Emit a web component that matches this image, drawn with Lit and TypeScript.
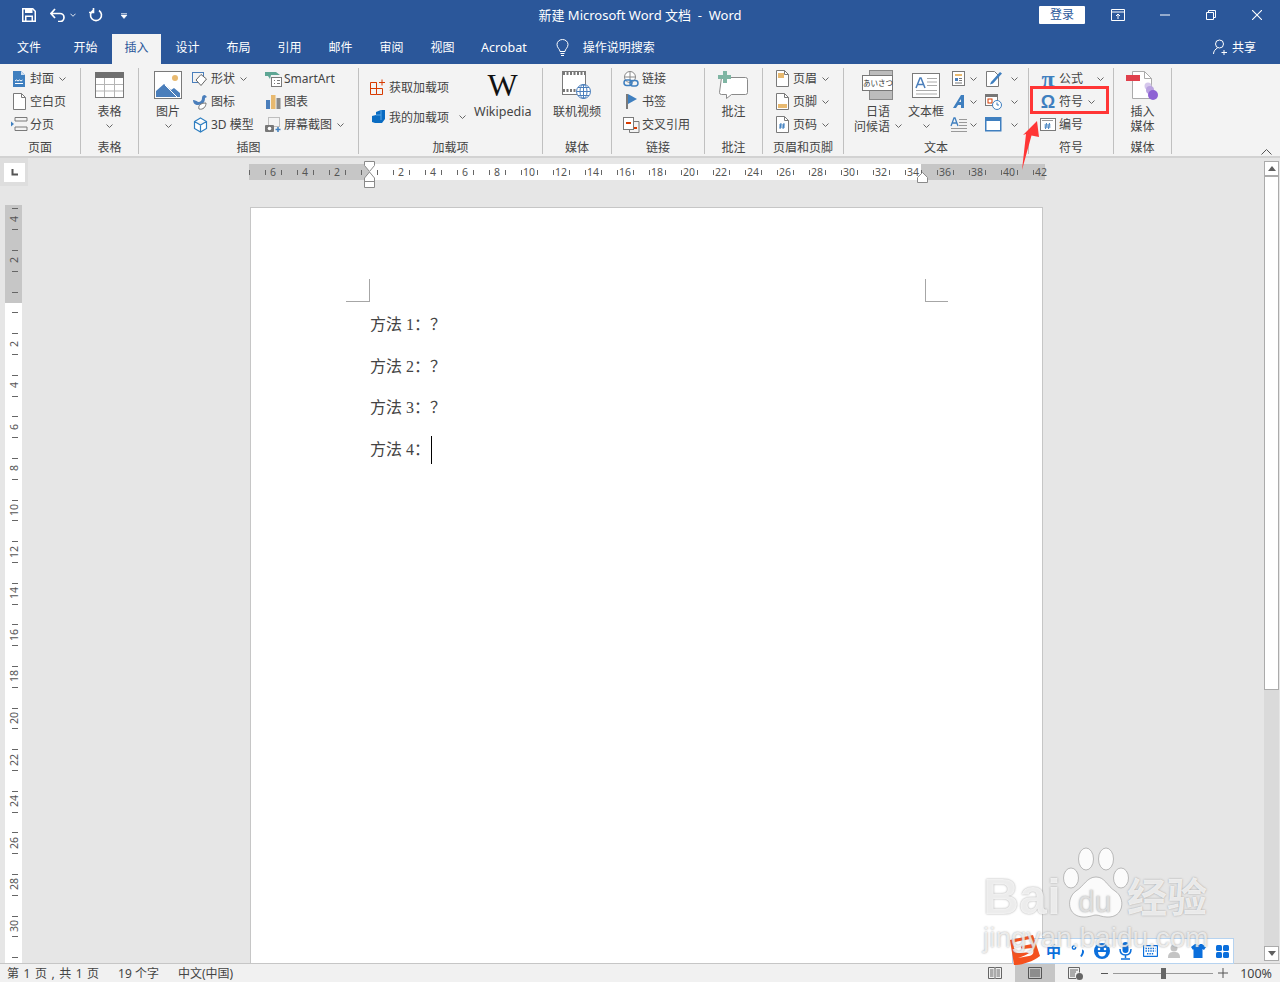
import { LitElement, html, svg, css } from "lit";
import { customElement } from "lit/decorators.js";

const B = "#4a7ebb", G = "#7a7a7a", O = "#e8b96f", R = "#d83b01";
const chev = html`<svg class="chev" width="7" height="4" viewBox="0 0 7 4"><path d="M.5.5l3 3 3-3" fill="none" stroke="#666"/></svg>`;
const page = () => svg`<path d="M1.500.5h8l4 4v12h-12z" fill="#fff" stroke="${G}"/><path d="M9.500.5v4h4" fill="none" stroke="${G}"/>`;

const I: Record<string, any> = {
  cover: html`<svg width="14" height="18" viewBox="0 0 14 18"><path d="M1 1h8l4 4v12H1z" fill="#3f7fbf"/><path d="M9 1v4h4z" fill="#cfe0f2"/><path d="M3 11l1.500-1 1.500 1 1.500-1 1.500 1 1.500-1M3 13.500h8" stroke="#fff" fill="none"/></svg>`,
  blank: html`<svg width="15" height="18" viewBox="0 0 15 18">${page()}</svg>`,
  brk: html`<svg width="17" height="17" viewBox="0 0 17 17"><path d="M4 1.500h12M4 14.500h12M4 1.500V5h12V1.500M4 14.500V11h12v3.500" fill="none" stroke="${G}"/><path d="M0 5.500l3 2.500-3 2.500z" fill="#3f7fbf"/></svg>`,
  table: html`<svg width="29" height="26" viewBox="0 0 29 26"><rect x=".5" y=".5" width="28" height="25" fill="#fff" stroke="${G}"/><rect width="29" height="6" fill="#6f6f6f"/><path d="M1 12.500h27M1 19h27M9.500 6v19M19.500 6v19" stroke="#b5b5b5"/></svg>`,
  pic: html`<svg width="28" height="28" viewBox="0 0 28 28"><rect x=".5" y=".5" width="27" height="27" fill="#fff" stroke="${G}"/><circle cx="21" cy="7" r="3" fill="${O}"/><path d="M2 26v-6l8-7 7 6 3-2 6 5v4z" fill="${B}"/><path d="M11 14l12 12" stroke="#fff"/></svg>`,
  shape: html`<svg width="16" height="16" viewBox="0 0 16 16"><rect x=".5" y="1.500" width="11" height="10" fill="none" stroke="${B}"/><path d="M9 3.500l5.500 4.500L9 14.500 4 9z" fill="#fff" stroke="#666"/></svg>`,
  ico: html`<svg width="16" height="16" viewBox="0 0 16 16"><path d="M1 6c2 0 4 1 5 2 3 0 4-2 4-4 0-2 1-3 3-3l2 2-2 1c0 4-2 7-7 7-3 0-5-2-5-5z" fill="${B}"/><path d="M7 15c-1-3 1-6 7-6 0 4-3 7-7 6z" fill="#fff" stroke="#777"/></svg>`,
  cube: html`<svg width="15" height="16" viewBox="0 0 15 16"><path d="M7.500 1l6 3.500v7l-6 3.500-6-3.500v-7zM1.500 4.500l6 3.500 6-3.500M7.500 8v7" fill="#fff" stroke="#2f7fc1" stroke-width="1.200"/></svg>`,
  smart: html`<svg width="17" height="16" viewBox="0 0 17 16"><path d="M0 1h11l4 3h-9l-1 4-2-3H0z" fill="#5ea694"/><rect x="6.500" y="6.500" width="10" height="9" fill="#fff" stroke="${G}"/><path d="M9 9.500h1M12 9.500h3M9 12.500h1M12 12.500h3" stroke="${G}"/></svg>`,
  chart: html`<svg width="15" height="15" viewBox="0 0 15 15"><rect y="6" width="4" height="9" fill="${B}"/><rect x="5" y="1" width="4.500" height="14" fill="${O}"/><rect x="10.500" y="4" width="4" height="11" fill="#8a8a8a"/></svg>`,
  shot: html`<svg width="17" height="15" viewBox="0 0 17 15"><rect x="3.500" y=".5" width="11" height="9" fill="none" stroke="#888" stroke-dasharray="1 1"/><rect y="8" width="9" height="7" rx="1" fill="#777"/><circle cx="4.500" cy="11.500" r="1.800" fill="#fff"/><path d="M13 10v5M10.500 12.500h5" stroke="#3f7fbf" stroke-width="1.500"/></svg>`,
  getadd: html`<svg width="16" height="16" viewBox="0 0 16 16"><path d="M.5 3.500h6v12h-6zM.5 9.500h12v6h-6M6.500 9.500V3.500" fill="none" stroke="${R}"/><path d="M12 .5v6M9 3.500h6" stroke="${R}"/></svg>`,
  myadd: html`<svg width="15" height="14" viewBox="0 0 15 14"><path d="M5 2l5-2h4v9l-3 4H4L1 12V6l4-1z" fill="#0a6cc2"/><path d="M5 5h5V0M10 5v5" stroke="#5aa7e6" fill="none"/></svg>`,
  video: html`<svg width="29" height="28" viewBox="0 0 29 28"><rect x=".5" y=".5" width="23" height="23" fill="#fff" stroke="${G}"/><path d="M1 2.500h22M1 19.500h22" stroke="#777" stroke-width="3" stroke-dasharray="2 1.500"/><circle cx="21.500" cy="20.500" r="7" fill="#fff" stroke="${B}"/><path d="M14.500 20.500h14M21.500 13.500v14M16 16.500h11M16 24.500h11" stroke="${B}"/><ellipse cx="21.500" cy="20.500" rx="3.500" ry="7" fill="none" stroke="${B}"/></svg>`,
  link: html`<svg width="16" height="16" viewBox="0 0 16 16"><circle cx="7" cy="6" r="5.500" fill="#fff" stroke="#888"/><path d="M1.500 6h11M7 .5v11" stroke="#888"/><rect x="1" y="9" width="8" height="5.500" rx="2.700" fill="none" stroke="#3f7fbf" stroke-width="1.500"/><rect x="7" y="9.500" width="8" height="5.500" rx="2.700" fill="none" stroke="#3f7fbf" stroke-width="1.500"/></svg>`,
  mark: html`<svg width="13" height="15" viewBox="0 0 13 15"><rect x="1" width="2" height="15" fill="${G}"/><path d="M3 0l9 5-9 5z" fill="#3f7fbf"/></svg>`,
  cross: html`<svg width="17" height="16" viewBox="0 0 17 16"><rect x=".5" y=".5" width="10" height="12" fill="#fff" stroke="${G}"/><path d="M3 6h5" stroke="${R}" stroke-width="2"/><path d="M10.500 4.500h5.500v11H6.500v-3" fill="none" stroke="${G}"/><path d="M11 11h3" stroke="${R}" stroke-width="2"/></svg>`,
  note: html`<svg width="31" height="29" viewBox="0 0 31 29"><path d="M3.500 6.500h24a2 2 0 0 1 2 2v13a2 2 0 0 1-2 2h-14l-5 4v-4h-5a2 2 0 0 1-2-2z" fill="#fff" stroke="#8a8a8a"/><path d="M5 0h4v4h4v4H9v4H5V8H0V4h5z" fill="#7fb5a3"/></svg>`,
  head: html`<svg width="15" height="18" viewBox="0 0 15 18">${page()}<rect x="3" y="3" width="6" height="5" fill="${O}"/></svg>`,
  foot: html`<svg width="15" height="18" viewBox="0 0 15 18">${page()}<rect x="3" y="11" width="9" height="4" fill="${O}"/></svg>`,
  pnum: html`<svg width="15" height="18" viewBox="0 0 15 18">${page()}<path d="M6 7l-1 6M9 7l-1 6M4 9h6M4 11h6" stroke="#3f7fbf"/></svg>`,
  qp: html`<svg width="14" height="15" viewBox="0 0 14 15"><rect x=".5" y=".5" width="12" height="14" fill="#fff" stroke="${G}"/><rect x="3" y="3" width="7" height="2" fill="${O}"/><rect x="3" y="7" width="3" height="3" fill="${B}"/><path d="M7 7.500h3M7 9.500h3M3 12h7" stroke="#777"/></svg>`,
  wa: html`<svg width="14" height="15" viewBox="0 0 14 15"><path d="M1 14L9 1h3v13H9v-3H6l-2 3zM7 8h2V5z" fill="#3f7fbf"/></svg>`,
  drop: html`<svg width="17" height="16" viewBox="0 0 17 16"><path d="M1 9l3-8h1l3 8M2.500 6h4" fill="none" stroke="#3f7fbf" stroke-width="1.300"/><path d="M9 2.500h8M9 5.500h8M9 8.500h8M1 11.500h16M1 14.500h16" stroke="#999"/></svg>`,
  sig: html`<svg width="17" height="17" viewBox="0 0 17 17"><path d="M1.500 1.500h8l4 4v11h-12z" fill="#fff" stroke="${G}"/><path d="M6 12L15 2l2 1.500-9 10-3 1z" fill="#3f7fbf"/></svg>`,
  date: html`<svg width="17" height="16" viewBox="0 0 17 16"><rect x=".5" y=".5" width="12" height="11" fill="#fff" stroke="${G}"/><rect width="13" height="3" fill="#777"/><rect x="3" y="5" width="4" height="4" fill="none" stroke="${R}"/><circle cx="12" cy="11" r="4.500" fill="#fff" stroke="#3f7fbf"/><path d="M12 8.500V11h2" fill="none" stroke="#3f7fbf"/></svg>`,
  obj: html`<svg width="17" height="15" viewBox="0 0 17 15"><rect x=".75" y=".75" width="15" height="13" fill="#fff" stroke="#3f7fbf" stroke-width="1.500"/><rect width="16" height="4" fill="#3f7fbf"/></svg>`,
  num: html`<svg width="16" height="13" viewBox="0 0 16 13"><rect x=".5" y=".5" width="15" height="12" fill="#fff" stroke="${G}"/><path d="M2 2.500h11" stroke="#999"/><path d="M6.500 5l-1 6M9.500 5l-1 6M4.500 7h6M4.500 9h6" stroke="#3f7fbf"/></svg>`,
  tbox: html`<svg width="28" height="25" viewBox="0 0 28 25"><rect x=".5" y=".5" width="27" height="24" fill="#fff" stroke="${G}"/><path d="M4 15l4-10h1l4 10M5.500 11.500h6" fill="none" stroke="${B}" stroke-width="1.500"/><path d="M15 5.500h10M15 9h10M15 12.500h10M4 17.500h21M4 21h21" stroke="#aaa"/></svg>`,
  media: html`<svg width="33" height="29" viewBox="0 0 33 29"><path d="M6.500.5h12l7 7v20h-19z" fill="#fff" stroke="#aaa"/><path d="M18.500.5v7h7" fill="none" stroke="#aaa"/><rect y="4" width="14" height="6" fill="#e0404c"/><circle cx="22" cy="15" r="3.500" fill="#d6c8ec"/><circle cx="24" cy="19" r="4" fill="#b9a2e0"/><circle cx="27" cy="24" r="5" fill="#8e62d4"/></svg>`,
};

const row = (icon: any, label: string, car = false, cls = "") =>
  html`<div class="row ${cls}"><span class="ic">${icon}</span><span>${label}</span>${car ? chev : ""}</div>`;
const big = (icon: any, l1: string, l2: any = "", cls = "") =>
  html`<div class="big ${cls}"><div class="bigic">${icon}</div><div class="ln">${l1}</div><div class="ln">${l2}</div></div>`;
const smallCaret = (icon: any) => html`<div class="row sc"><span class="ic2">${icon}</span>${chev}</div>`;
const group = (cls: string, body: any, label: string) =>
  html`<section class="grp ${cls}"><div class="body">${body}</div><div class="glabel">${label}</div></section><div class="sep"></div>`;

const hLabels = [-6, -4, -2, 2, 4, 6, 8, 10, 12, 14, 16, 18, 20, 22, 24, 26, 28, 30, 32, 34, 36, 38, 40, 42];
const hTicks = Array.from({ length: 50 }, (_, k) => k * 16);
const vTicks = Array.from({ length: 40 }, (_, k) => 97 + 10.4 + (k - 5) * 20.8);
const vLabels = [-4, -2, 2, 4, 6, 8, 10, 12, 14, 16, 18, 20, 22, 24, 26, 28, 30];
const tabs = ["设计", "布局", "引用", "邮件", "审阅", "视图"];
const lines = ["方法 1：？", "方法 2：？", "方法 3：？"];

@customElement("app-root")
export class AppRoot extends LitElement {
  static styles = css`
    :host { display: flex; flex-direction: column; position: relative; width: 1280px; height: 982px; overflow: hidden;
      font: 12px/15px "Noto Sans", "Noto Sans CJK SC", sans-serif; color: #444; background: #e6e6e6; }
    svg { display: block; flex: none; }
    .title { height: 30px; background: #2b579a; color: #fff; display: grid; grid-template-columns: 1fr auto 1fr; align-items: center; font-size: 13px; }
    .qa { display: flex; align-items: center; padding-left: 22px; }
    .qa .undo { margin-left: 14px; }
    .qa .c1 { margin-left: 4px; } .qa .redo { margin-left: 13px; } .qa .more { margin-left: 18px; }
    .winbtns { display: flex; align-items: center; justify-content: flex-end; font-size: 12px; }
    .login { width: 46px; height: 18px; background: #fff; color: #2b579a; text-align: center; line-height: 18px; border-radius: 1px; margin-right: 26px; }
    .winbtns .min { margin-left: 35px; } .winbtns .rest { margin-left: 36px; } .winbtns .close { margin: 0 18px 0 36px; }
    .tabs { height: 34px; background: #2b579a; color: #fff; display: flex; align-items: stretch; padding-left: 3.500px; }
    .tab { width: 51px; display: flex; align-items: center; justify-content: center; }
    .tab.file { margin-right: 5.500px; }
    .tab.on { background: #f3f3f3; color: #2b579a; margin: 4px 1px 0; width: 49px; padding-bottom: 4px; box-sizing: border-box; }
    .tab.acro { width: auto; padding: 0 0 0 13px; margin-right: 29px; font-size: 12.500px; }
    .search { display: flex; align-items: center; gap: 14px; }
    .share { margin-left: auto; margin-right: 24px; display: flex; align-items: center; gap: 4px; }
    .ribbon { height: 94px; box-sizing: border-box; background: #f3f3f3; border-bottom: 2px solid #d2d2d2; display: flex; position: relative; flex: none; }
    .sep { width: 1px; background: #c0c0c0; margin: 4px 0; height: 86px; flex: none; }
    .grp { flex: none; box-sizing: border-box; padding-top: 3px; }
    .body { height: 73px; display: flex; align-items: flex-start; white-space: nowrap; box-sizing: border-box; }
    .glabel { height: 16px; line-height: 16px; text-align: center; }
    .col { display: flex; flex-direction: column; flex: none; }
    .row { height: 23px; display: flex; align-items: center; gap: 3px; white-space: nowrap; }
    .ic { width: 16px; height: 16px; display: flex; align-items: center; justify-content: center; flex: none; }
    .ic2 { width: 17px; height: 17px; display: flex; align-items: center; justify-content: center; flex: none; }
    .chev { margin-left: 2px; }
    .ln .chev { margin-left: 0; }
    .big { display: flex; flex-direction: column; align-items: center; flex: none; }
    .bigic { height: 36.500px; display: flex; align-items: center; justify-content: center; }
    .ln { height: 15px; line-height: 15px; display: flex; align-items: center; justify-content: center; gap: 5px; white-space: nowrap; }
    .g1 { width: 80px; } .g2 { width: 57px; } .g3 { width: 219px; }
    .g4 { width: 183px; } .g5 { width: 68px; } .g6 { width: 92px; } .g7 { width: 57px; }
    .g8 { width: 80px; } .g9 { width: 184px; } .g10 { width: 84px; } .g11 { width: 57px; }
    .g1 .body, .g6 .body, .g10 .body, .g8 .body, .g4 .body { padding-left: 11px; }
    .g3 .body { padding-left: 15px; }
    .center .body { justify-content: center; }
    .g3 .big { width: 28px; } .g3 .col1 { margin-left: 10px; width: 73px; }
    .g4 .col { width: 104px; padding-top: 5px; } .g4 .row { height: 30px; }
    .g4 .chev { margin-left: 7px; }
    .wiki { font-size: 12.500px; }
    .wlogo { font: 32px/30px "Liberation Serif", serif; color: #111; }
    .g9 .body { padding-left: 16px; }
    .g9 .big { width: 36px; }
    .g9 .tb { margin-left: 12px; }
    .g9 .c1 { margin-left: 6px; } .g9 .c2 { margin-left: 8px; }
    .sc .chev { margin-left: 0; }
    .g9 .c2 .chev { margin-left: 6px; }
    .far .chev { margin-left: 11px; }
    .greet { position: relative; width: 32px; height: 30px; }
    .greet i { position: absolute; left: 7px; top: 0; width: 24px; height: 30px; background: #bcbcbc; border: 1px solid #888; box-sizing: border-box; }
    .greet b { position: absolute; left: 0; top: 5px; width: 31px; height: 16px; background: #fff; border: 1px solid #777; box-sizing: border-box; font: 7.500px/14px "Noto Sans CJK JP", sans-serif; text-align: center; color: #333; }
    .pi { width: 16px; font: 700 24px/16px "Liberation Serif", serif; color: #3f7fbf; text-align: center; }
    .om { width: 16px; font: 700 18px/16px "Liberation Sans", sans-serif; color: #3f7fbf; text-align: center; }
    .collapse { position: absolute; right: 8px; bottom: 1px; }
    .work { flex: 1; min-height: 0; display: grid; grid-template-columns: 1fr 16px; overflow: hidden; background: #e6e6e6; }
    .main { display: flex; flex-direction: column; min-width: 0; }
    .rulerrow { height: 49px; display: flex; flex: none; }
    .tabsel { width: 28px; height: 28px; background: #dedede; display: flex; align-items: center; justify-content: center; flex: none; }
    .tabsel div { width: 21px; height: 19px; background: #fff; display: flex; align-items: center; justify-content: center; }
    .hr { position: relative; margin: 6px 0 0 221px; width: 796px; height: 16px; display: flex; color: #555; }
    .rg { background: #c6c6c6; height: 16px; } .rw { background: #fff; height: 16px; }
    .hr .t { position: absolute; top: 6px; width: 1px; height: 5px; background: #666; }
    .hr .n { position: absolute; top: 0; width: 14px; margin-left: -7px; text-align: center; font: 10.500px/16px "Noto Sans", sans-serif; }
    .mk { position: absolute; }
    .lower { flex: 1; min-height: 0; display: flex; }
    .vr { position: relative; width: 17px; margin: -2px 0 0 5px; background: #fff; flex: none; overflow: hidden; color: #555; }
    .vg { position: absolute; left: 0; top: 0; width: 17px; height: 98px; background: #c6c6c6; }
    .vr .t { position: absolute; left: 7px; width: 6px; height: 1px; background: #666; }
    .vr .n { position: absolute; left: 2px; width: 14px; height: 14px; margin-top: -7px; text-align: center; font: 10.500px/14px "Noto Sans", sans-serif; transform: rotate(-90deg); }
    .page { margin-left: 228px; width: 793px; box-sizing: border-box; background: #fff; border: 1px solid #c6c6c6; border-bottom: 0; padding-top: 71px; flex: none; }
    .marks { display: flex; justify-content: space-between; margin-left: 95px; width: 602px; height: 23px; }
    .cm { height: 23px; box-sizing: border-box; border-bottom: 1px solid #a6a6a6; }
    .cm.l { width: 24px; border-right: 1px solid #a6a6a6; } .cm.r { width: 23px; border-left: 1px solid #a6a6a6; }
    .doc { margin: 2px 0 0 119px; font: 16px/41.670px "Liberation Serif", "Noto Sans CJK SC", serif; color: #444; }
    .p { height: 41.670px; position: relative; display: flex; align-items: center; white-space: pre; }
    .cursor { width: 1px; height: 28px; background: #000; margin-left: 1px; margin-top: 1px; }
    .sb { display: flex; flex-direction: column; background: #e6e6e6; }
    .sbtn { width: 15px; height: 15px; box-sizing: border-box; border: 1px solid #ababab; background: #fff; display: flex; align-items: center; justify-content: center; flex: none; }
    .sbtn.up { margin-top: 3px; } .sbtn.dn { margin-bottom: 2px; }
    .thumb { width: 15px; height: 514px; box-sizing: border-box; border: 1px solid #ababab; background: #fff; flex: none; }
    .track { flex: 1; width: 15px; background: #dadada; }
    .status { height: 19px; flex: none; box-sizing: border-box; background: #f1f1f1; border-top: 1px solid #c6c6c6; display: flex; align-items: center; padding-left: 7px; font-size: 12px; }
    .status .s1 { word-spacing: 1.400px; }
    .status .s2 { margin-left: 19px; } .status .s3 { margin-left: 19px; }
    .sright { margin-left: auto; display: flex; align-items: center; height: 18px; }
    .sv { width: 40px; height: 18px; display: flex; align-items: center; justify-content: center; }
    .sv.on { background: #c6c6c6; }
    .slider { position: relative; width: 100px; height: 1px; background: #999; margin: 0 5px; }
    .slider i { position: absolute; left: 48px; top: -5px; width: 5px; height: 11px; background: #666; }
    .pct { margin: 0 8px 0 12px; font-size: 12.500px; }
    .wm { position: absolute; left: 975px; top: 840px; width: 245px; height: 115px; pointer-events: none; }
    .wm span { position: absolute; color: rgba(255,255,255,.8); text-shadow: 0 0 2px rgba(130,130,130,.75); white-space: nowrap; font-family: "Liberation Sans", sans-serif; }
    .wm .bai { left: 8px; top: 32px; font-size: 50px; line-height: 50px; font-weight: 700; }
    .wm .du { left: 103px; top: 47px; font-size: 30px; line-height: 30px; color: rgba(225,225,225,.95); }
    .wm .jy { left: 152px; top: 33px; font: 700 40px/44px "Noto Sans CJK SC", sans-serif; }
    .wm .url { left: 8px; top: 82px; font-size: 28px; line-height: 32px; color: rgba(255,255,255,.72); }
    .wm svg { position: absolute; left: 86px; top: 3px; }
    .ime { position: absolute; left: 1012px; top: 938px; width: 222px; height: 26px; box-sizing: border-box; background: #fff; border: 1px solid #b6d3f0; display: flex; align-items: center; padding-left: 33px; color: #0b6fdc; }
    .ime .zh { font: 700 15px/20px "Noto Sans CJK SC", sans-serif; width: 15px; }
    .ime > * { flex: none; }
    .logo { position: absolute; left: 1008px; top: 934px; }
    .redbox { position: absolute; left: 1030px; top: 86px; width: 79px; height: 28px; box-sizing: border-box; border: 3px solid #ff3535; }
    .arrow { position: absolute; left: 1015px; top: 115px; }
  `;

  render() {
    return html`
      <header class="title">
        <div class="qa">
          <svg width="14" height="14" viewBox="0 0 14 14"><path d="M.75.75h10l2.500 2.500v10H.75z" fill="none" stroke="#fff" stroke-width="1.500"/><rect x="3" y="1" width="7.500" height="4" fill="#fff"/><path d="M3.750 13V8.250h6.500V13" fill="none" stroke="#fff" stroke-width="1.500"/></svg>
          <svg class="undo" width="16" height="14" viewBox="0 0 16 14"><path d="M1 5.500h9a4 4 0 0 1 0 8H8M5 1L1 5.500 5 10" fill="none" stroke="#fff" stroke-width="1.700"/></svg>
          <svg class="c1" width="6" height="4" viewBox="0 0 7 4"><path d="M.5.5l3 3 3-3" fill="none" stroke="#fff"/></svg>
          <svg class="redo" width="14" height="14" viewBox="0 0 14 14"><path d="M4 2.500A5.500 5.500 0 1 0 10 2.500M4.500 0v4.500H0" fill="none" stroke="#fff" stroke-width="1.600"/></svg>
          <svg class="more" width="7" height="7" viewBox="0 0 7 7"><path d="M0 1.500h6M0 3h6L3 6.500z" fill="#fff" stroke="#fff" stroke-width=".6"/></svg>
        </div>
        <div>新建 Microsoft Word 文档&nbsp; - &nbsp;Word</div>
        <div class="winbtns">
          <div class="login">登录</div>
          <svg width="14" height="12" viewBox="0 0 14 12"><path d="M.5.5h13v11H.5zM.5 3h13M7 10V5M5 7l2-2 2 2" fill="none" stroke="#fff"/></svg>
          <svg class="min" width="10" height="2" viewBox="0 0 10 2"><path d="M0 1h10" stroke="#fff"/></svg>
          <svg class="rest" width="10" height="10" viewBox="0 0 10 10"><path d="M.5 2.500h7v7h-7zM2.500 2.500v-2h7v7h-2" fill="none" stroke="#fff"/></svg>
          <svg class="close" width="10" height="10" viewBox="0 0 10 10"><path d="M0 0l10 10M10 0L0 10" stroke="#fff" stroke-width="1.100"/></svg>
        </div>
      </header>
      <nav class="tabs">
        <div class="tab file">文件</div><div class="tab">开始</div><div class="tab on">插入</div>
        ${tabs.map((t) => html`<div class="tab">${t}</div>`)}
        <div class="tab acro">Acrobat</div>
        <div class="search">
          <svg width="13" height="17" viewBox="0 0 13 17"><path d="M4 12.500C4 10 1 9 1 5.500a5.500 5 0 0 1 11 0C12 9 9 10 9 12.500zM4.500 14.500h4M5 16.500h3" fill="none" stroke="#fff"/></svg>
          <span>操作说明搜索</span>
        </div>
        <div class="share">
          <svg width="15" height="16" viewBox="0 0 15 16"><circle cx="6.500" cy="5" r="4" fill="none" stroke="#fff"/><path d="M.5 15c0-3 2-5 4-6M11 11v5M8.500 13.500h5.500" fill="none" stroke="#fff"/></svg>
          <span>共享</span>
        </div>
      </nav>
      <div class="ribbon">
        ${group("g1", html`<div class="col">${row(I.cover, "封面", true)}${row(I.blank, "空白页")}${row(I.brk, "分页")}</div>`, "页面")}
        ${group("g2 center", big(I.table, "表格", chev), "表格")}
        ${group("g3", html`${big(I.pic, "图片", chev)}
          <div class="col col1">${row(I.shape, "形状", true)}${row(I.ico, "图标")}${row(I.cube, "3D 模型")}</div>
          <div class="col">${row(I.smart, "SmartArt")}${row(I.chart, "图表")}${row(I.shot, "屏幕截图", true)}</div>`, "插图")}
        ${group("g4", html`<div class="col">${row(I.getadd, "获取加载项")}${row(I.myadd, "我的加载项", true)}</div>
          <div class="big wiki"><div class="bigic"><span class="wlogo">W</span></div><div class="ln">Wikipedia</div></div>`, "加载项")}
        ${group("g5 center", big(I.video, "联机视频"), "媒体")}
        ${group("g6", html`<div class="col">${row(I.link, "链接")}${row(I.mark, "书签")}${row(I.cross, "交叉引用")}</div>`, "链接")}
        ${group("g7 center", big(I.note, "批注"), "批注")}
        ${group("g8", html`<div class="col">${row(I.head, "页眉", true)}${row(I.foot, "页脚", true)}${row(I.pnum, "页码", true)}</div>`, "页眉和页脚")}
        ${group("g9", html`
          ${big(html`<div class="greet"><i></i><b>あいさつ</b></div>`, "日语", html`问候语${chev}`)}
          ${big(I.tbox, "文本框", chev, "tb")}
          <div class="col c1">${smallCaret(I.qp)}${smallCaret(I.wa)}${smallCaret(I.drop)}</div>
          <div class="col c2">${smallCaret(I.sig)}${smallCaret(I.date)}${smallCaret(I.obj)}</div>`, "文本")}
        ${group("g10", html`<div class="col">
          ${row(html`<span class="pi">π</span>`, "公式", true, "far")}
          ${row(html`<span class="om">Ω</span>`, "符号", true)}
          ${row(I.num, "编号")}</div>`, "符号")}
        ${group("g11 center", big(I.media, "插入", "媒体"), "媒体")}
        <svg class="collapse" width="11" height="6" viewBox="0 0 11 6"><path d="M.5 5.500l5-5 5 5" fill="none" stroke="#555"/></svg>
      </div>
      <div class="work">
        <div class="main">
          <div class="rulerrow">
            <div class="tabsel"><div><svg width="7" height="7" viewBox="0 0 7 7"><path d="M1.500 0v5.500H7" fill="none" stroke="#555" stroke-width="2"/></svg></div></div>
            <div class="hr">
              <div class="rg" style="width:120px"></div><div class="rw" style="width:552px"></div><div class="rg" style="width:124px"></div>
              ${hTicks.map((x) => html`<i class="t" style="left:${x}px"></i>`)}
              ${hLabels.map((n) => html`<span class="n" style="left:${120 + n * 16}px">${Math.abs(n)}</span>`)}
              <svg class="mk" style="left:115px;top:-3px" width="11" height="27" viewBox="0 0 11 27"><path d="M.5.5h10v4l-5 6-5-6zM5.500 11l5 6v9.500H.5V17zM.5 20.500h10" fill="#fff" stroke="#8a8a8a"/></svg>
              <svg class="mk" style="left:668px;top:8px" width="11" height="11" viewBox="0 0 11 11"><path d="M5.500.5l5 5v5H.5v-5z" fill="#fff" stroke="#8a8a8a"/></svg>
            </div>
          </div>
          <div class="lower">
            <div class="vr">
              <div class="vg"></div>
              ${vTicks.map((y) => html`<i class="t" style="top:${y}px"></i>`)}
              ${vLabels.map((n) => html`<span class="n" style="top:${97 + n * 20.8}px">${Math.abs(n)}</span>`)}
            </div>
            <div class="page">
              <div class="marks"><div class="cm l"></div><div class="cm r"></div></div>
              <div class="doc">
                ${lines.map((l) => html`<div class="p">${l}</div>`)}
                <div class="p">方法 4：<i class="cursor"></i></div>
              </div>
            </div>
          </div>
        </div>
        <aside class="sb">
          <div class="sbtn up"><svg width="8" height="5" viewBox="0 0 8 5"><path d="M4 0l4 5H0z" fill="#606060"/></svg></div>
          <div class="thumb"></div>
          <div class="track"></div>
          <div class="sbtn dn"><svg width="8" height="5" viewBox="0 0 8 5"><path d="M4 5l4-5H0z" fill="#606060"/></svg></div>
        </aside>
      </div>
      <footer class="status">
        <span class="s1">第 1 页 , 共 1 页</span><span class="s2">19 个字</span><span class="s3">中文(中国)</span>
        <div class="sright">
          <div class="sv"><svg width="14" height="12" viewBox="0 0 14 12"><path d="M.5.5h6l.5 1 .5-1h6v11h-6l-.5-.5-.5.5h-6zM7 1.500V11M2 3h3.500M2 5h3.500M2 7h3.500M2 9h3.500M8.500 3H12M8.500 5H12M8.500 7H12M8.500 9H12" fill="none" stroke="#666"/></svg></div>
          <div class="sv on"><svg width="14" height="12" viewBox="0 0 14 12"><path d="M.5.5h13v11H.5zM2 3h10M2 5h10M2 7h10M2 9h10" fill="none" stroke="#555"/></svg></div>
          <div class="sv"><svg width="15" height="13" viewBox="0 0 15 13"><path d="M8 11.500H.5V.5h11v5M2 3h8M2 5h6M2 7h5M2 9h5" fill="none" stroke="#666"/><circle cx="11.500" cy="9.500" r="3.500" fill="#666"/></svg></div>
          <svg style="margin-left:6px" width="7" height="1" viewBox="0 0 7 1"><path d="M0 .5h7" stroke="#555"/></svg>
          <div class="slider"><i></i></div>
          <svg width="10" height="10" viewBox="0 0 10 10"><path d="M0 5h10M5 0v10" stroke="#555"/></svg>
          <span class="pct">100%</span>
        </div>
      </footer>
      <div class="ime">
        <span class="zh">中</span>
        <svg style="margin-left:10px" width="14" height="14" viewBox="0 0 14 14"><circle cx="3" cy="3.500" r="1.700" fill="none" stroke="#0b6fdc" stroke-width="1.300"/><path d="M11 6.500c1.500 0 1.500 2.500-1 6" fill="none" stroke="#0b6fdc" stroke-width="2"/></svg>
        <svg style="margin-left:9px" width="16" height="16" viewBox="0 0 16 16"><circle cx="8" cy="8" r="8" fill="#0b6fdc"/><circle cx="5" cy="6" r="1.300" fill="#fff"/><circle cx="11" cy="6" r="1.300" fill="#fff"/><path d="M4 9h8c0 3-2 4.500-4 4.500S4 12 4 9z" fill="#fff"/></svg>
        <svg style="margin-left:9px" width="13" height="18" viewBox="0 0 13 18"><rect x="3.500" y="0" width="6" height="11" rx="3" fill="#0b6fdc"/><path d="M1 7c0 4 2.500 6 5.500 6S12 11 12 7M6.500 13v3M2 17h9" fill="none" stroke="#0b6fdc" stroke-width="1.500"/></svg>
        <svg style="margin-left:11px" width="15" height="12" viewBox="0 0 15 12"><rect x=".5" y=".5" width="14" height="11" rx="1" fill="none" stroke="#0b6fdc" stroke-width="1.300"/><path d="M2.500 3.500h10M2.500 6h10M4 8.800h7" stroke="#0b6fdc" stroke-width="1.500" stroke-dasharray="1.400 1"/></svg>
        <svg style="margin-left:10px" width="12" height="14" viewBox="0 0 12 14"><circle cx="6" cy="4" r="3.500" fill="#c4c4c4"/><path d="M0 14c0-5 2-6 6-6s6 1 6 6z" fill="#c4c4c4"/></svg>
        <svg style="margin-left:11px" width="15" height="14" viewBox="0 0 15 14"><path d="M4 0h2c.5 1.500 2.500 1.500 3 0h2l4 3-2 3-1.500-1v9h-9V5L2 6 0 3z" fill="#0b6fdc"/></svg>
        <svg style="margin-left:10px" width="13" height="13" viewBox="0 0 13 13"><g fill="#0b6fdc"><rect width="6" height="6" rx="1.500"/><rect x="7" width="6" height="6" rx="1.500"/><rect y="7" width="6" height="6" rx="1.500"/><rect x="7" y="7" width="6" height="6" rx="1.500"/></g></svg>
      </div>
      <svg class="logo" width="33" height="32" viewBox="0 0 33 32"><path d="M2 6L25 1l3 9 4 12c-8 6-18 9-26 9z" fill="#f4511e"/><path d="M7 8l15-3 2 5-10 2c-2 1-1 3 1 3l9-1c3 4 1 7-3 8l-11 2c5-2 9-3 11-5-1-1-5 0-9 0-6 0-8-8-5-11z" fill="#fff"/></svg>
      <div class="wm">
        <svg width="80" height="80" viewBox="0 0 80 80"><g fill="rgba(255,255,255,.82)" stroke="rgba(140,140,140,.55)"><ellipse cx="10" cy="35" rx="7.500" ry="10"/><ellipse cx="25" cy="16" rx="7.500" ry="11"/><ellipse cx="45" cy="16" rx="7.500" ry="11"/><ellipse cx="60" cy="35" rx="7.500" ry="10"/><path d="M35 34c9 0 11 9 19 14 11 7 9 27-8 26-5 0-8-2-11-2s-6 2-12 2C6 74 5 55 15 48c8-5 11-14 20-14z"/></g></svg>
        <span class="bai">Bai</span>
        <span class="du">du</span>
        <span class="jy">经验</span>
        <span class="url">jingyan.baidu.com</span>
      </div>
      <div class="redbox"></div>
      <svg class="arrow" width="26" height="58" viewBox="0 0 26 58"><path d="M22 6l2 16-7.500-1.500L7 55l4-36-3 1z" fill="#ff3535"/></svg>
    `;
  }
}
